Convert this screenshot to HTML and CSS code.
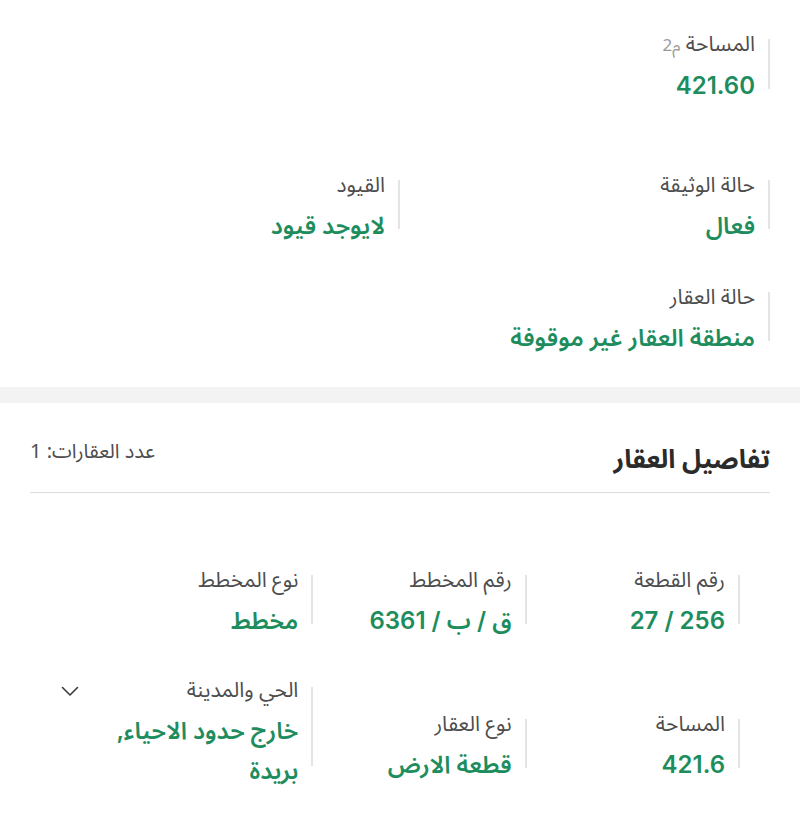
FILE: index.html
```html
<!DOCTYPE html>
<html lang="ar" dir="rtl">
<head>
    <meta charset="UTF-8">
    <meta name="viewport" content="width=device-width, initial-scale=1.0">
    <title>تفاصيل العقار</title>
    <link rel="stylesheet" href="styles.css">
</head>
<body>
    <section class="info">
        <div class="field lone">
            <div class="label">المساحة <span class="unit">م2</span></div>
            <div class="value">421.60</div>
        </div>
        <div class="pair">
            <div class="field">
                <div class="label">حالة الوثيقة</div>
                <div class="value">فعال</div>
            </div>
            <div class="field">
                <div class="label">القيود</div>
                <div class="value">لايوجد قيود</div>
            </div>
            <div class="field">
                <div class="label">حالة العقار</div>
                <div class="value">منطقة العقار غير موقوفة</div>
            </div>
        </div>
    </section>

    <div class="band"></div>

    <section class="details">
        <div class="details_head">
            <h2>تفاصيل العقار</h2>
            <span class="count">عدد العقارات: 1</span>
        </div>
        <div class="grid">
            <div class="field">
                <div class="label">رقم القطعة</div>
                <div class="value">256 / 27</div>
            </div>
            <div class="field">
                <div class="label">رقم المخطط</div>
                <div class="value">ق / ب / 6361</div>
            </div>
            <div class="field">
                <div class="label">نوع المخطط</div>
                <div class="value">مخطط</div>
            </div>
            <div class="field">
                <div class="label">المساحة</div>
                <div class="value">421.6</div>
            </div>
            <div class="field">
                <div class="label">نوع العقار</div>
                <div class="value">قطعة الارض</div>
            </div>
            <div class="field wide">
                <div class="label">الحي والمدينة</div>
                <div class="value">خارج حدود الاحياء, بريدة</div>
            </div>
            <a class="toggle" href="#">
                <svg width="18" height="11" viewBox="0 0 18 11"><path d="M1.5 1.5 L9 9 L16.5 1.5" fill="none" stroke="#3a3a3a" stroke-width="1.6" stroke-linecap="round" stroke-linejoin="round"/></svg>
            </a>
        </div>
    </section>
</body>
</html>
```

FILE: styles.css
```css
body,div,h2,section { margin:0; padding:0; }
body { background: #fff; font-family: "Noto Sans", "Noto Sans Arabic", "DejaVu Sans", sans-serif; color: #4d4d4d; }
a { text-decoration: none; }

/* 单个字段：标题 + 绿色数值，右侧一条灰色竖线 */
.field { position: relative; padding-right: 15px; }
.field::before { content: ""; position: absolute; right: 0; top: 9px; bottom: 17px; width: 2px; background: #e4e4e4; }
.label { font-size: 21px; line-height: 27px; color: #4d4d4d; }
.unit { font-size: 17px; color: #9b9b9b; }
.value { margin-top: 8px; font-family: Inter, "Noto Sans Arabic", "DejaVu Sans", sans-serif; font-size: 24px; line-height: 40px; font-weight: 600; color: #1e8d5e; }

.info { padding: 30px 30px 29px; }
.pair { display: grid; grid-template-columns: 1fr 1fr; row-gap: 37px; margin-top: 65px; }

.band { height: 16px; background: #f3f3f4; }

.details { padding: 35px 30px 0; }
.details_head { display: flex; justify-content: space-between; align-items: flex-start; padding-bottom: 14px; border-bottom: 1px solid #dcdcdc; }
.details_head h2 { font-size: 26px; line-height: 40px; font-weight: 700; color: #2b2b2b; }
.count { font-size: 20px; line-height: 26px; color: #4d4d4d; }

/* 三列字段 + 最左侧一列放展开箭头 */
.grid { display: grid; grid-template-columns: 1fr 1fr 1fr 70px; row-gap: 35px; align-items: end; padding-right: 30px; margin-top: 73px; }
.grid .field:nth-child(3n+1) { grid-column: 1; }
.grid .wide { margin-bottom: -6px; }
.grid .wide::before { top: 11px; bottom: 25px; }
.toggle { grid-row: 2; grid-column: 4; align-self: start; justify-self: center; margin: 10px 0 0 10px; display: block; line-height: 0; }
```
